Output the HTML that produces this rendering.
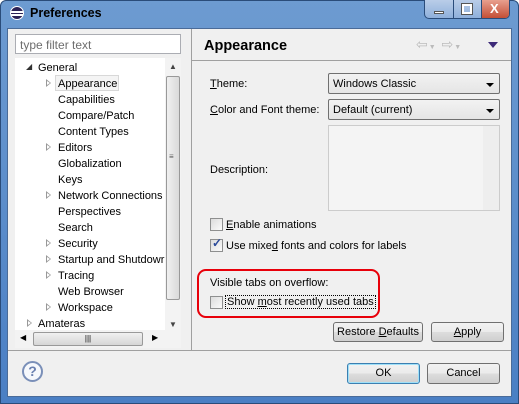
<!DOCTYPE html><html><head><style>
*{margin:0;padding:0;box-sizing:border-box}
body{width:519px;height:404px;position:relative;font-family:"Liberation Sans",sans-serif;font-size:11px;color:#000;background:#fff;overflow:hidden}
.a{position:absolute}
.btn{position:absolute;border:1px solid #707070;border-radius:3px;background:linear-gradient(#f2f2f2,#ebebeb 50%,#dddddd 51%,#cfcfcf);text-align:center;line-height:18px}
.cb{position:absolute;width:13px;height:13px;border:1px solid #8e8f8f;background:linear-gradient(135deg,#dcdcdc,#fbfbfb)}
.dd{position:absolute;border:1px solid #707070;border-radius:2px;background:linear-gradient(#f2f2f2,#e5e5e5);padding-left:4px;line-height:20px}
.dd:after{content:"";position:absolute;right:5px;top:9px;border:4px solid transparent;border-top:4px solid #000;border-bottom:0}
.tri{position:absolute;width:0;height:0;border-left:5px solid #999;border-top:4px solid transparent;border-bottom:4px solid transparent}
.tri:after{content:"";position:absolute;left:-4px;top:-2px;border-left:3px solid #fff;border-top:2px solid transparent;border-bottom:2px solid transparent}
</style></head><body>
<div class="a" style="left:0;top:0;width:519px;height:404px;background:linear-gradient(#6d9bd1,#4a7fc4);border-radius:6px 6px 0 0;border:1px solid #2a4c7a"></div>
<div class="a" style="left:10px;top:6px;width:14px;height:14px;border-radius:50%;background:#2c2255;border:1px solid #fff"></div>
<div class="a" style="left:11px;top:11px;width:12px;height:2px;background:#fff"></div>
<div class="a" style="left:11px;top:14px;width:12px;height:2px;background:#fff"></div>
<div class="a" style="left:30px;top:6px;font-weight:bold;font-size:12.5px">Preferences</div>
<div class="a" style="left:424px;top:0;width:86px;height:19px;border:1px solid #2a4c7a;border-top:0;border-radius:0 0 5px 5px;background:linear-gradient(#b9cde8,#8fb0db);overflow:hidden">
<div class="a" style="left:56px;top:0;width:30px;height:19px;background:linear-gradient(#e8a08f,#c24a31)"></div>
<div class="a" style="left:28px;top:0;width:1px;height:19px;background:#2a4c7a"></div>
<div class="a" style="left:56px;top:0;width:1px;height:19px;background:#2a4c7a"></div>
<div class="a" style="left:9px;top:11px;width:10px;height:3px;background:#fff;border:1px solid #555"></div>
<div class="a" style="left:37px;top:4px;width:10px;height:10px;border:2px solid #fff;outline:1px solid #555"></div>
<div class="a" style="left:65px;top:1px;color:#fff;font-weight:bold;font-size:13px">X</div>
</div>
<div class="a" style="left:7px;top:28px;width:505px;height:369px;background:#f0f0f0;border:1px solid #4a6b98"></div>
<!-- left -->
<div class="a" style="left:15px;top:34px;width:166px;height:20px;background:#fff;border:1px solid #abadb3;color:#6d6d6d;padding:3px 4px;font-size:12px">type filter text</div>
<div class="a" style="left:15px;top:58px;width:166px;height:290px;background:#fff"></div>
<div class="a" style="left:165px;top:58px;width:16px;height:272px;background:#f3f3f3"></div>
<div class="a" style="left:166px;top:76px;width:14px;height:224px;border:1px solid #999;border-radius:2px;background:linear-gradient(90deg,#f0f0f0,#dadada)"></div>
<div class="a" style="left:169px;top:152px;font-size:8px;color:#555">≡</div>
<div class="a" style="left:169px;top:62px;font-size:8px;color:#444">▲</div>
<div class="a" style="left:169px;top:320px;font-size:8px;color:#444">▼</div>
<div class="a" style="left:15px;top:330px;width:166px;height:18px;background:#f3f3f3"></div>
<div class="a" style="left:33px;top:332px;width:110px;height:14px;border:1px solid #999;border-radius:2px;background:linear-gradient(#f0f0f0,#d6d6d6);text-align:center;font-size:8px;line-height:12px">|||</div>
<div class="a" style="left:20px;top:333px;font-size:8px">◀</div>
<div class="a" style="left:152px;top:333px;font-size:8px">▶</div>
<div class="a" style="left:26px;top:62px;font-size:8px;color:#333">◢</div>
<div class="a" style="left:38px;top:60px;line-height:16px">General</div>
<div class="a" style="left:55px;top:75px;width:64px;height:16px;border:1px solid #d8d8d8;background:#f4f4f4"></div>
<div class="a" style="left:58px;top:76px;line-height:16px">Appearance<br>Capabilities<br>Compare/Patch<br>Content Types<br>Editors<br>Globalization<br>Keys<br>Network Connections<br>Perspectives<br>Search<br>Security<br>Startup and Shutdowr<br>Tracing<br>Web Browser<br>Workspace</div>
<div class="tri" style="left:46px;top:79px"></div>
<div class="tri" style="left:46px;top:143px"></div>
<div class="tri" style="left:46px;top:191px"></div>
<div class="tri" style="left:46px;top:239px"></div>
<div class="tri" style="left:46px;top:255px"></div>
<div class="tri" style="left:46px;top:271px"></div>
<div class="tri" style="left:46px;top:303px"></div>
<div class="tri" style="left:27px;top:319px"></div>
<div class="a" style="left:38px;top:316px;line-height:16px">Amateras</div>
<div class="a" style="left:191px;top:29px;width:1px;height:321px;background:#a0a0a0"></div>
<!-- right -->
<div class="a" style="left:204px;top:38px;font-weight:bold;font-size:14.5px">Appearance</div>
<div class="a" style="left:416px;top:36px;font-size:14px;color:#bbb;letter-spacing:1px">⇦<span style="font-size:7px">▼</span> ⇨<span style="font-size:7px">▼</span></div>
<div class="a" style="left:488px;top:42px;border:5px solid transparent;border-top:6px solid #3d2a78;border-bottom:0"></div>
<div class="a" style="left:192px;top:60px;width:319px;height:1px;background:#a0a0a0"></div>
<div class="a" style="left:210px;top:78px"><u>T</u>heme:</div>
<div class="dd" style="left:328px;top:73px;width:172px;height:21px">Windows Classic</div>
<div class="a" style="left:210px;top:104px"><u>C</u>olor and Font theme:</div>
<div class="dd" style="left:328px;top:99px;width:172px;height:21px">Default (current)</div>
<div class="a" style="left:328px;top:125px;width:172px;height:86px;border:1px solid #ccc;background:#f4f4f4"></div>
<div class="a" style="left:483px;top:126px;width:16px;height:84px;background:#eee"></div>
<div class="a" style="left:210px;top:164px">Description:</div>
<div class="cb" style="left:210px;top:218px"></div>
<div class="a" style="left:226px;top:219px"><u>E</u>nable animations</div>
<div class="cb" style="left:210px;top:239px"></div>
<div class="a" style="left:212px;top:236px;color:#2a4a9a;font-weight:bold;font-size:12px">✓</div>
<div class="a" style="left:226px;top:240px">Use mixe<u>d</u> fonts and colors for labels</div>
<div class="a" style="left:197px;top:269px;width:183px;height:49px;border:2px solid #e8000a;border-radius:9px"></div>
<div class="a" style="left:210px;top:277px">Visible tabs on overflow:</div>
<div class="cb" style="left:210px;top:296px"></div>
<div class="a" style="left:225px;top:295px;border:1px dotted #000;padding:0 1px">Show <u>m</u>ost recently used tabs</div>
<div class="btn" style="left:333px;top:322px;width:90px;height:20px">Restore <u>D</u>efaults</div>
<div class="btn" style="left:431px;top:322px;width:73px;height:20px"><u>A</u>pply</div>
<div class="a" style="left:8px;top:350px;width:503px;height:1px;background:#a0a0a0"></div>
<div class="a" style="left:22px;top:361px;width:21px;height:21px;border:2px solid #7a8fb8;border-radius:50%;text-align:center;font-weight:bold;color:#6a80b0;font-size:14px;line-height:17px;background:#f6f8fc">?</div>
<div class="btn" style="left:347px;top:363px;width:73px;height:21px;border-color:#3c7fb1;box-shadow:inset 0 0 0 1px #9fe0f8">OK</div>
<div class="btn" style="left:427px;top:363px;width:73px;height:21px">Cancel</div>
</body></html>
